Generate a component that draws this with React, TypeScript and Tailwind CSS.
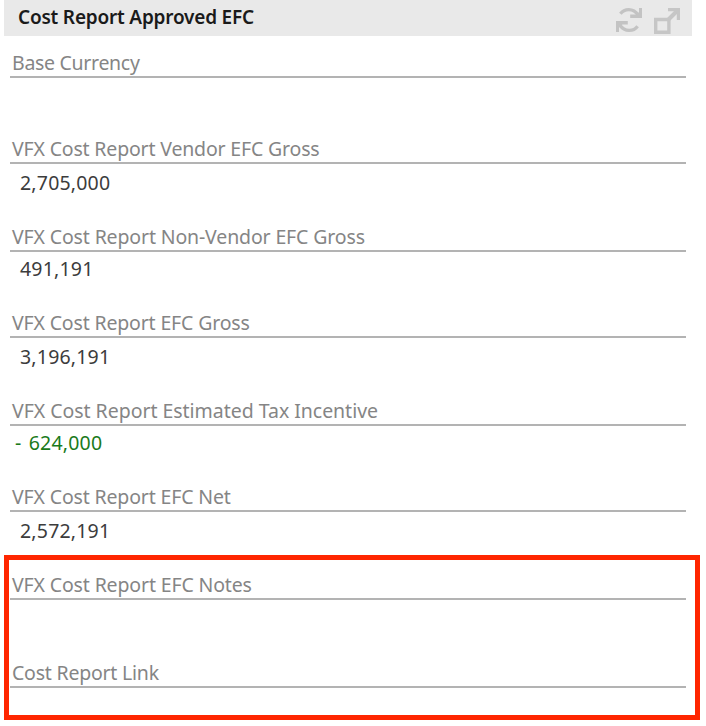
import { clsx } from "clsx";

type FieldProps = {
	label: string;
	value?: string;
	negative?: boolean;
	/** Height of the label row, and its tracking. */
	labelClass: string;
	/** Height and padding of the value area under the rule. */
	valueClass: string;
};

function RefreshIcon() {
	return (
		<svg width="26" height="24" viewBox="0 0 26 24" fill="none">
			<path
				d="M4.4 5.8C6.4 3 9.4 1.6 12.8 1.6c4 0 7 1.8 9.4 5.4"
				stroke="#c3c3c3"
				strokeWidth="3.2"
			/>
			<path d="M26 0v10H14.2V6.6h5.4L23 4.2V0z" fill="#c3c3c3" />
			<path
				d="M21.6 18.2c-2 2.8-5 4.2-8.4 4.2-4 0-7-1.8-9.4-5.4"
				stroke="#c3c3c3"
				strokeWidth="3.2"
			/>
			<path d="M0 24V13h11.8v3.4H6.4L3 19.8V24z" fill="#c3c3c3" />
		</svg>
	);
}

function ExpandIcon() {
	return (
		<svg width="26" height="26" viewBox="0 0 26 26" fill="none">
			<path d="M1.7 11.5h13.2v12.8H1.7z" stroke="#c6c6c6" strokeWidth="3.4" />
			<path d="M14.5 11.5 24 2" stroke="#c6c6c6" strokeWidth="4" />
			<path d="M14 0h12v12h-3.2V3.2H14z" fill="#c6c6c6" />
		</svg>
	);
}

function Field({ label, value, negative, labelClass, valueClass }: FieldProps) {
	return (
		<div>
			<div
				className={clsx(
					"flex items-end border-b-2 border-[#b3b3b3] pl-0.5 text-[19.5px] leading-[26px] whitespace-nowrap text-[#858585]",
					labelClass,
				)}
			>
				{label}
			</div>
			<div
				className={clsx(
					"text-[19.5px] leading-[26px] whitespace-nowrap",
					negative
						? "pl-[5px] tracking-[0.2px] [word-spacing:2px] text-[#1a7a1a]"
						: "pl-2.5 tracking-[0.2px] text-[#3c3c3c]",
					valueClass,
				)}
			>
				{value}
			</div>
		</div>
	);
}

export default function App() {
	return (
		<div className="h-[726px] w-[706px] overflow-hidden bg-white pl-1 font-['Noto_Sans',sans-serif]">
			<header className="flex h-9 w-[688px] items-start justify-between bg-[#e9e9e9] pr-3 pl-3.5">
				<h1 className="pt-1 text-[19px] leading-[26px] font-semibold tracking-[-0.2px] whitespace-nowrap text-[#1a1a1a]">
					Cost Report Approved EFC
				</h1>
				<div className="flex gap-3 pt-2">
					<RefreshIcon />
					<ExpandIcon />
				</div>
			</header>

			<main className="w-[682px] pl-1.5">
				<Field
					label="Base Currency"
					labelClass="h-[42px] tracking-[-0.3px]"
					valueClass="h-11"
				/>
				<Field
					label="VFX Cost Report Vendor EFC Gross"
					value="2,705,000"
					labelClass="h-[42px] tracking-[-0.17px]"
					valueClass="h-[46px] pt-[6px]"
				/>
				<Field
					label="VFX Cost Report Non-Vendor EFC Gross"
					value="491,191"
					labelClass="h-[42px] tracking-[-0.14px]"
					valueClass="h-11 pt-[4px]"
				/>
				<Field
					label="VFX Cost Report EFC Gross"
					value="3,196,191"
					labelClass="h-[42px] tracking-[-0.16px]"
					valueClass="h-[46px] pt-[6px]"
				/>
				<Field
					label="VFX Cost Report Estimated Tax Incentive"
					value="- 624,000"
					negative
					labelClass="h-[42px] tracking-[-0.03px]"
					valueClass="h-11 pt-[4px]"
				/>
				<Field
					label="VFX Cost Report EFC Net"
					value="2,572,191"
					labelClass="h-[42px] tracking-[-0.15px]"
					valueClass="h-[43px] pt-[6px]"
				/>
			</main>

			<section className="h-[165px] w-[696px] border-[5px] border-[#ff2600] pr-[9px] pl-px">
				<Field
					label="VFX Cost Report EFC Notes"
					labelClass="h-10 tracking-[-0.14px]"
					valueClass="h-[46px]"
				/>
				<Field
					label="Cost Report Link"
					labelClass="h-[42px] tracking-[-0.22px]"
					valueClass="h-6"
				/>
			</section>
		</div>
	);
}
